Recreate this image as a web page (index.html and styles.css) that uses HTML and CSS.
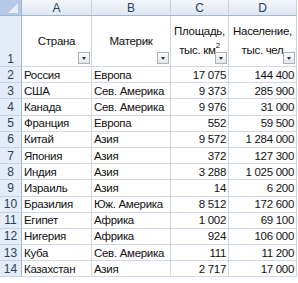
FILE: index.html
```html
<!DOCTYPE html>
<html lang="ru">
<head>
<meta charset="utf-8">
<link rel="stylesheet" href="styles.css">
</head>
<body>
<div class="sheet">
  <div class="corner"><span class="tri"></span></div>
  <div class="colhead">A</div>
  <div class="colhead">B</div>
  <div class="colhead">C</div>
  <div class="colhead">D</div>

  <div class="rowhead rh1">1</div>
  <div class="cell hdr"><span>Страна</span><span class="dd"></span></div>
  <div class="cell hdr"><span>Материк</span><span class="dd"></span></div>
  <div class="cell hdr"><span>Площадь,<br>тыс. км<sup>2</sup></span><span class="dd"></span></div>
  <div class="cell hdr"><span>Население,<br>тыс. чел</span><span class="dd"></span></div>

  <div class="rowhead">2</div><div class="cell">Россия</div><div class="cell">Европа</div><div class="cell num">17 075</div><div class="cell num">144 400</div>
  <div class="rowhead">3</div><div class="cell">США</div><div class="cell">Сев. Америка</div><div class="cell num">9 373</div><div class="cell num">285 900</div>
  <div class="rowhead">4</div><div class="cell">Канада</div><div class="cell">Сев. Америка</div><div class="cell num">9 976</div><div class="cell num">31 000</div>
  <div class="rowhead">5</div><div class="cell">Франция</div><div class="cell">Европа</div><div class="cell num">552</div><div class="cell num">59 500</div>
  <div class="rowhead">6</div><div class="cell">Китай</div><div class="cell">Азия</div><div class="cell num">9 572</div><div class="cell num">1 284 000</div>
  <div class="rowhead">7</div><div class="cell">Япония</div><div class="cell">Азия</div><div class="cell num">372</div><div class="cell num">127 300</div>
  <div class="rowhead">8</div><div class="cell">Индия</div><div class="cell">Азия</div><div class="cell num">3 288</div><div class="cell num">1 025 000</div>
  <div class="rowhead">9</div><div class="cell">Израиль</div><div class="cell">Азия</div><div class="cell num">14</div><div class="cell num">6 200</div>
  <div class="rowhead">10</div><div class="cell">Бразилия</div><div class="cell">Юж. Америка</div><div class="cell num">8 512</div><div class="cell num">172 600</div>
  <div class="rowhead">11</div><div class="cell">Египет</div><div class="cell">Африка</div><div class="cell num">1 002</div><div class="cell num">69 100</div>
  <div class="rowhead">12</div><div class="cell">Нигерия</div><div class="cell">Африка</div><div class="cell num">924</div><div class="cell num">106 000</div>
  <div class="rowhead">13</div><div class="cell">Куба</div><div class="cell">Сев. Америка</div><div class="cell num">111</div><div class="cell num">11 200</div>
  <div class="rowhead">14</div><div class="cell">Казахстан</div><div class="cell">Азия</div><div class="cell num">2 717</div><div class="cell num">17 000</div>
</div>
</body>
</html>
```

FILE: styles.css
```css
html, body {
  margin: 0;
  padding: 0;
  background: #ffffff;
}
.sheet {
  display: grid;
  grid-template-columns: 22px 70px 79px 58px 68px;
  grid-template-rows: 16px 51px repeat(13, 16.2px);
  width: 298px;
  height: 283px;
  overflow: hidden;
  font-family: "Liberation Sans", Arial, sans-serif;
  font-size: 11.5px;
  letter-spacing: -0.3px;
  color: #111;
}
.corner {
  position: relative;
  background: #b3c9e6;
  border-right: 1px solid #9eb6ce;
  border-bottom: 1px solid #9eb6ce;
  box-sizing: border-box;
}
.tri {
  position: absolute;
  right: 3px;
  bottom: 2px;
  width: 0;
  height: 0;
  border-left: 10px solid transparent;
  border-bottom: 10px solid #e8eef8;
}
.colhead {
  background: linear-gradient(#f4f7fb, #dde6f1);
  border-right: 1px solid #c5d2e3;
  border-bottom: 1px solid #9eb6ce;
  box-sizing: border-box;
  display: flex;
  align-items: center;
  justify-content: center;
  color: #27415f;
  font-size: 12px;
  letter-spacing: 0;
}
.rowhead {
  background: #e4ecf7;
  border-right: 1px solid #9eb6ce;
  border-bottom: 1px solid #c5d2e3;
  box-sizing: border-box;
  display: flex;
  align-items: center;
  justify-content: center;
  color: #27415f;
  font-size: 12px;
  letter-spacing: 0;
}
.rh1 {
  align-items: flex-end;
}
.cell {
  border-right: 1px solid #d0d7e5;
  border-bottom: 1px solid #d0d7e5;
  box-sizing: border-box;
  display: flex;
  align-items: center;
  padding: 0 2px;
  white-space: nowrap;
  overflow: hidden;
  line-height: 14px;
}
.num {
  justify-content: flex-end;
}
.hdr {
  position: relative;
  justify-content: center;
  text-align: center;
  line-height: 19px;
  overflow: visible;
}
.hdr sup {
  font-size: 8px;
  line-height: 0;
  vertical-align: 6px;
}
.dd {
  position: absolute;
  right: 1px;
  bottom: 2px;
  width: 12px;
  height: 12px;
  box-sizing: border-box;
  border: 1px solid #a9b3be;
  background: linear-gradient(#fbfbfb, #e3e6ea);
}
.dd::after {
  content: "";
  position: absolute;
  left: 3px;
  top: 4px;
  border-left: 2.5px solid transparent;
  border-right: 2.5px solid transparent;
  border-top: 3px solid #333;
}
```
